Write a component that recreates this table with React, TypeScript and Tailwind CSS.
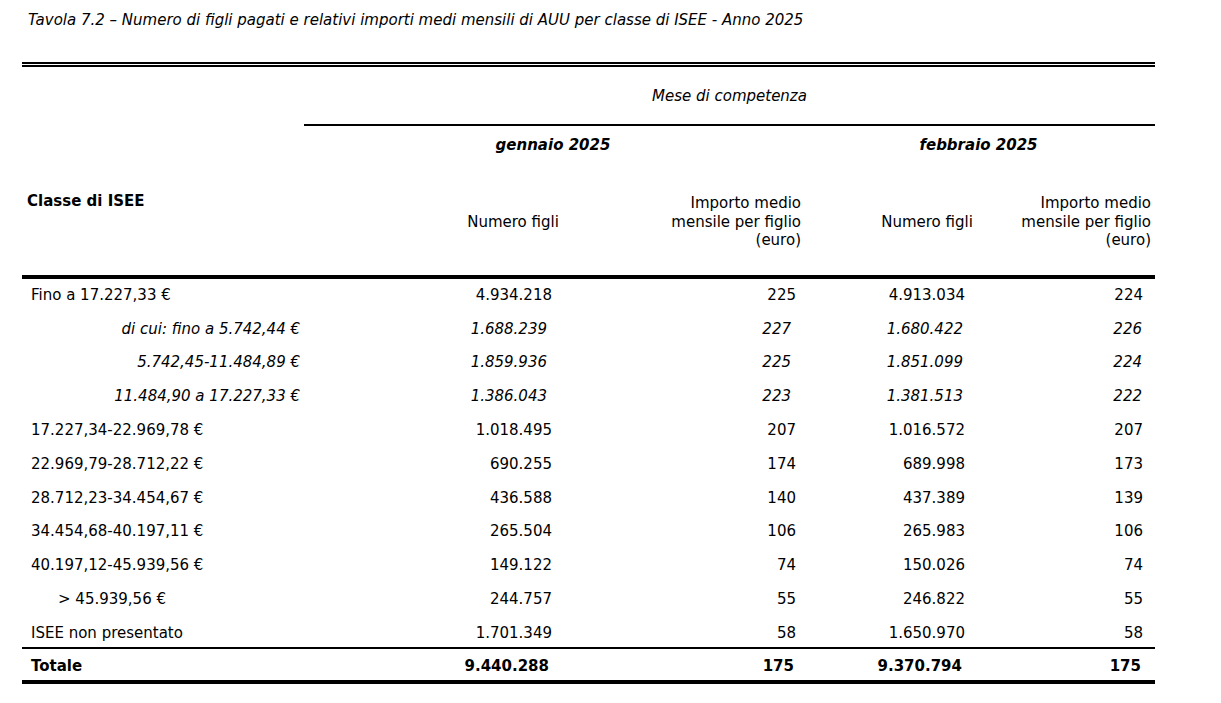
import React from "react";

type Row = {
  label: string;
  kind: "normal" | "sub" | "indent";
  g1: string;
  i1: string;
  g2: string;
  i2: string;
};

const rows: Row[] = [
  { label: "Fino a 17.227,33 €", kind: "normal", g1: "4.934.218", i1: "225", g2: "4.913.034", i2: "224" },
  { label: "di cui: fino a 5.742,44 €", kind: "sub", g1: "1.688.239", i1: "227", g2: "1.680.422", i2: "226" },
  { label: "5.742,45-11.484,89 €", kind: "sub", g1: "1.859.936", i1: "225", g2: "1.851.099", i2: "224" },
  { label: "11.484,90 a 17.227,33 €", kind: "sub", g1: "1.386.043", i1: "223", g2: "1.381.513", i2: "222" },
  { label: "17.227,34-22.969,78 €", kind: "normal", g1: "1.018.495", i1: "207", g2: "1.016.572", i2: "207" },
  { label: "22.969,79-28.712,22 €", kind: "normal", g1: "690.255", i1: "174", g2: "689.998", i2: "173" },
  { label: "28.712,23-34.454,67 €", kind: "normal", g1: "436.588", i1: "140", g2: "437.389", i2: "139" },
  { label: "34.454,68-40.197,11 €", kind: "normal", g1: "265.504", i1: "106", g2: "265.983", i2: "106" },
  { label: "40.197,12-45.939,56 €", kind: "normal", g1: "149.122", i1: "74", g2: "150.026", i2: "74" },
  { label: "> 45.939,56 €", kind: "indent", g1: "244.757", i1: "55", g2: "246.822", i2: "55" },
  { label: "ISEE non presentato", kind: "normal", g1: "1.701.349", i1: "58", g2: "1.650.970", i2: "58" },
];

function DataRow({ r, last }: { r: Row; last: boolean }) {
  const sub = r.kind === "sub";
  return (
    <div className={`flex ${last ? "h-[30px] pt-[2px]" : "h-[33.8px] pb-[2px]"} items-center ${sub ? "italic" : ""}`}>
      <div
        className={`w-[282px] shrink-0 ${
          sub ? "text-right pr-[4px]" : r.kind === "indent" ? "pl-[36px]" : "pl-[9px]"
        }`}
      >
        {r.label}
      </div>
      <div className={`w-[418px] shrink-0 text-right ${sub ? "pr-[175px]" : "pr-[170px]"}`}>{r.g1}</div>
      <div className={`w-[80px] shrink-0 text-right ${sub ? "pr-[11px]" : "pr-[6px]"}`}>{r.i1}</div>
      <div className={`w-[250px] shrink-0 text-right ${sub ? "pr-[89px]" : "pr-[87px]"}`}>{r.g2}</div>
      <div className={`w-[103px] shrink-0 text-right ${sub ? "pr-[13px]" : "pr-[12px]"}`}>{r.i2}</div>
    </div>
  );
}

function ImportoHeader({ pr }: { pr: string }) {
  return (
    <div className={`flex justify-end ${pr}`}>
      <div className="whitespace-nowrap text-right leading-[18.5px]">
        Importo medio
        <br />
        mensile per figlio
        <br />
        (euro)
      </div>
    </div>
  );
}

export default function App() {
  return (
    <div className="min-h-[703px] w-[1221px] bg-white text-black font-['DejaVu_Sans',sans-serif] text-[15px] leading-[18px]">
      <div className="pl-[28px] pt-[11px] italic text-[15px] leading-[18px]">
        Tavola 7.2 – Numero di figli pagati e relativi importi medi mensili di AUU per classe di ISEE - Anno 2025
      </div>

      <div className="ml-[22px] mt-[33px] w-[1133px]">
        {/* double rule */}
        <div className="h-[2px] bg-black" />
        <div className="h-[1px]" />
        <div className="h-[2px] bg-black" />

        {/* header */}
        <div className="flex h-[208px]">
          <div className="w-[282px] shrink-0 pl-[5px] pt-[125px] font-bold">Classe di ISEE</div>
          <div className="flex flex-1 flex-col">
            <div className="flex h-[57px] items-center justify-center italic">Mese di competenza</div>
            <div className="h-[2px] bg-black" />
            <div className="flex h-[36px] items-center pt-[2px] font-bold italic">
              <div className="w-[498px] text-center">gennaio 2025</div>
              <div className="w-[353px] text-center">febbraio 2025</div>
            </div>
            <div className="flex h-[113px] items-center pt-[7px]">
              <div className="w-[418px] shrink-0 text-center">Numero figli</div>
              <div className="w-[80px] shrink-0">
                <ImportoHeader pr="pr-[1px]" />
              </div>
              <div className="w-[250px] shrink-0 text-center">Numero figli</div>
              <div className="w-[103px] shrink-0">
                <ImportoHeader pr="pr-[4px]" />
              </div>
            </div>
          </div>
        </div>

        <div className="h-[4px] bg-black" />

        {/* body */}
        <div>
          {rows.map((r, i) => (
            <DataRow key={i} r={r} last={i === rows.length - 1} />
          ))}
        </div>

        <div className="h-[2px] bg-black" />

        <div className="flex h-[31px] items-center pt-[4px] font-bold">
          <div className="w-[282px] shrink-0 pl-[9px]">Totale</div>
          <div className="w-[418px] shrink-0 pr-[173px] text-right">9.440.288</div>
          <div className="w-[80px] shrink-0 pr-[8px] text-right">175</div>
          <div className="w-[250px] shrink-0 pr-[90px] text-right">9.370.794</div>
          <div className="w-[103px] shrink-0 pr-[14px] text-right">175</div>
        </div>

        <div className="h-[4px] bg-black" />
      </div>
    </div>
  );
}
